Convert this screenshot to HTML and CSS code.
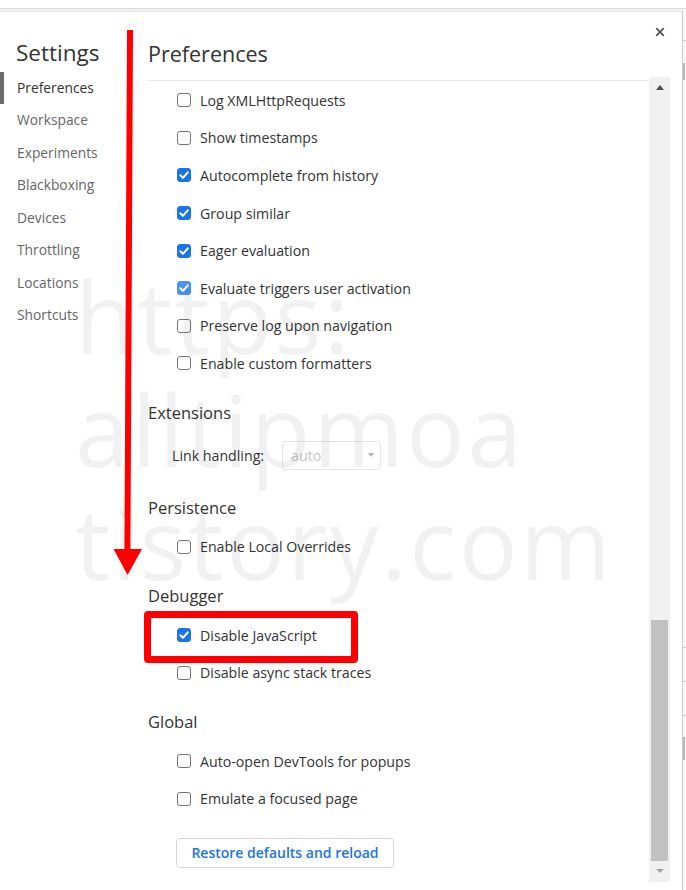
FILE: index.html
```html
<!DOCTYPE html>
<html lang="en">
<head>
<meta charset="utf-8">
<title>Settings - Preferences</title>
<link rel="stylesheet" href="styles.css">
</head>
<body>
<div class="screen">
  <div class="topbar"></div>
  <div class="main-row">
    <div class="dialog">
      <aside class="sidebar">
        <h1 class="sidebar-title">Settings</h1>
        <nav class="tabs">
          <div class="tab active">Preferences</div>
          <div class="tab">Workspace</div>
          <div class="tab">Experiments</div>
          <div class="tab">Blackboxing</div>
          <div class="tab">Devices</div>
          <div class="tab">Throttling</div>
          <div class="tab">Locations</div>
          <div class="tab">Shortcuts</div>
        </nav>
      </aside>
      <section class="panel">
        <div class="panel-main">
          <header class="panel-header">Preferences</header>
          <div class="content">
            <label class="row"><span class="cb"></span>Log XMLHttpRequests</label>
            <label class="row"><span class="cb"></span>Show timestamps</label>
            <label class="row"><span class="cb checked"><svg viewBox="0 0 14 14"><path d="M3.3 7.3 L5.9 9.8 L10.8 4.3"/></svg></span>Autocomplete from history</label>
            <label class="row"><span class="cb checked"><svg viewBox="0 0 14 14"><path d="M3.3 7.3 L5.9 9.8 L10.8 4.3"/></svg></span>Group similar</label>
            <label class="row"><span class="cb checked"><svg viewBox="0 0 14 14"><path d="M3.3 7.3 L5.9 9.8 L10.8 4.3"/></svg></span>Eager evaluation</label>
            <label class="row"><span class="cb checked soft"><svg viewBox="0 0 14 14"><path d="M3.3 7.3 L5.9 9.8 L10.8 4.3"/></svg></span>Evaluate triggers user activation</label>
            <label class="row"><span class="cb"></span>Preserve log upon navigation</label>
            <label class="row"><span class="cb"></span>Enable custom formatters</label>

            <h2 class="section-title">Extensions</h2>
            <div class="select-row">
              <span class="select-label">Link handling:</span>
              <span class="select">auto<span class="select-arrow"></span></span>
            </div>

            <h2 class="section-title">Persistence</h2>
            <label class="row"><span class="cb"></span>Enable Local Overrides</label>

            <h2 class="section-title">Debugger</h2>
            <label class="row"><span class="cb checked"><svg viewBox="0 0 14 14"><path d="M3.3 7.3 L5.9 9.8 L10.8 4.3"/></svg></span>Disable JavaScript</label>
            <label class="row"><span class="cb"></span>Disable async stack traces</label>

            <h2 class="section-title">Global</h2>
            <label class="row"><span class="cb"></span>Auto-open DevTools for popups</label>
            <label class="row"><span class="cb"></span>Emulate a focused page</label>

            <button class="restore">Restore defaults and reload</button>
          </div>
        </div>
        <div class="scrollbar">
          <span class="sb-up"></span>
          <span class="sb-thumb"></span>
          <span class="sb-down"></span>
        </div>
      </section>
      <button class="close" aria-label="Close"><svg viewBox="0 0 10 10"><path d="M1.2 1.2 L8.8 8.8 M8.8 1.2 L1.2 8.8"/></svg></button>
    </div>
    <div class="edge">
      <span class="edge-line l1"></span>
      <span class="edge-bar b1"></span>
      <span class="edge-line l2"></span>
      <span class="edge-line l3"></span>
      <span class="edge-line l3"></span>
      <span class="edge-bar b2"></span>
    </div>
  </div>

  <div class="watermark">
    <div>https:</div>
    <div>alltipmoa</div>
    <div>tistory.com</div>
  </div>

  <div class="highlight"></div>
  <svg class="arrow" viewBox="0 0 686 890" width="686" height="890">
    <path class="arrow-shaft" d="M130 30 L127.4 552"/>
    <polygon class="arrow-head" points="113.5,549 142,549 127.6,575"/>
  </svg>
</div>
</body>
</html>
```

FILE: styles.css
```css
* { box-sizing: border-box; }
html, body { margin: 0; padding: 0; background: #fff; }
body {
  font-family: "Open Sans", "Noto Sans", sans-serif;
  color: #333;
}
.screen {
  position: relative;
  width: 686px;
  height: 890px;
  overflow: hidden;
  background: #fff;
}
.topbar {
  height: 9px;
  border-bottom: 1px solid #dadada;
  background: #fff;
}
.main-row {
  display: flex;
  height: 881px;
  padding-top: 2px;
  background: linear-gradient(#f1f1f1, #fff 3px);
}
.dialog {
  position: relative;
  flex: none;
  width: 683px;
  height: 100%;
  display: flex;
  background: #fff;
  border-top: 1px solid #e2e2e2;
  border-right: 1px solid #cfcfcf;
  box-shadow: 1px 0 2px rgba(0,0,0,0.08);
}
.edge {
  flex: 1;
  display: flex;
  flex-direction: column;
  background: #fff;
}
.edge-line { display: block; height: 1px; background: #d2d2d2; }
.edge-bar { display: block; width: 2px; background: #bdbdbd; }
.l1 { margin-top: 29px; }
.b1 { margin-top: 22px; height: 17px; }
.l2 { margin-top: 567px; }
.l3 { margin-top: 33px; }
.b2 { margin-top: 21px; height: 23px; }

/* sidebar */
.sidebar {
  flex: none;
  width: 147px;
  padding-top: 26px;
}
.sidebar-title {
  margin: 0;
  padding-left: 16px;
  font-size: 22.5px;
  font-weight: 400;
  line-height: 30px;
  color: #333;
}
.tabs { margin-top: 4px; }
.tab {
  height: 32.43px;
  line-height: 32.43px;
  padding-left: 17px;
  font-size: 13.8px;
  color: #666;
}
.tab.active {
  color: #333;
  box-shadow: inset 4px 0 0 #6a6a6a;
}

/* panel */
.panel {
  flex: 1;
  display: flex;
  margin-right: 12px;
}
.panel-main {
  flex: 1;
  min-width: 0;
}
.panel-header {
  padding: 27px 0 11px 1px;
  font-size: 21.5px;
  line-height: 30px;
  color: #333;
  border-bottom: 1px solid #ebebeb;
}
.content {
  padding-left: 1px;
  padding-top: 0.5px;
  font-size: 14.2px;
  color: #333;
}
.row {
  display: flex;
  align-items: center;
  height: 37.6px;
  padding-left: 29px;
}
.cb {
  flex: none;
  width: 14px;
  height: 14px;
  margin-right: 9px;
  border: 1px solid #767676;
  border-radius: 3px;
  background: #fff;
  display: flex;
}
.cb.checked {
  border-color: #1a73e8;
  background: #1a73e8;
}
.cb.soft {
  border-color: #4d93ee;
  background: #4d93ee;
}
.cb svg {
  width: 14px;
  height: 14px;
  margin: -1px;
}
.cb svg path {
  fill: none;
  stroke: #fff;
  stroke-width: 2;
  stroke-linecap: round;
  stroke-linejoin: round;
}
.section-title {
  margin: 0 0 7px;
  padding-top: 17.8px;
  font-size: 16.5px;
  font-weight: 400;
  line-height: 26px;
  color: #333;
}
.select-row {
  display: flex;
  align-items: center;
  height: 44px;
  padding-left: 24px;
}
.select-label {
  flex: none;
  width: 110px;
}
.select {
  position: relative;
  display: flex;
  align-items: center;
  width: 99px;
  height: 29px;
  padding-left: 8px;
  border: 1px solid #e6e6e6;
  border-radius: 3px;
  color: #c6c6c6;
}
.select-arrow {
  position: absolute;
  right: 6px;
  top: 11px;
  width: 0;
  height: 0;
  border-left: 3.5px solid transparent;
  border-right: 3.5px solid transparent;
  border-top: 4px solid #b0b0b0;
}
.restore {
  display: block;
  margin: 20.5px 0 0 28px;
  width: 218px;
  height: 30px;
  padding: 0;
  border: 1px solid #d6d6d6;
  border-radius: 4px;
  background: #fff;
  font-family: "Open Sans", "Noto Sans", sans-serif;
  font-size: 14px;
  font-weight: 600;
  color: #1a73e8;
}

/* scrollbar */
.scrollbar {
  flex: none;
  width: 21px;
  height: 805px;
  margin-top: 65px;
  background: #f1f1f1;
  display: flex;
  flex-direction: column;
  align-items: center;
}
.sb-up {
  margin-top: 8px;
  width: 0;
  height: 0;
  border-left: 4.5px solid transparent;
  border-right: 4.5px solid transparent;
  border-bottom: 5px solid #505050;
}
.sb-thumb {
  margin-top: 530px;
  width: 17px;
  height: 241px;
  background: #c1c1c1;
}
.sb-down {
  margin-top: 8px;
  width: 0;
  height: 0;
  border-left: 4.5px solid transparent;
  border-right: 4.5px solid transparent;
  border-top: 4px solid #a3a3a3;
}

/* close */
.close {
  position: absolute;
  top: 14.5px;
  right: 17px;
  width: 10px;
  height: 10px;
  padding: 0;
  border: 0;
  background: transparent;
}
.close svg { display: block; width: 10px; height: 10px; }
.close path { stroke: #555; stroke-width: 1.8; fill: none; }

/* overlays */
.watermark {
  position: absolute;
  left: 75px;
  top: 260px;
  font-size: 98px;
  line-height: 113px;
  letter-spacing: 2.4px;
  color: rgba(0,0,0,0.055);
  white-space: nowrap;
  pointer-events: none;
}
.highlight {
  position: absolute;
  left: 144px;
  top: 611px;
  width: 214px;
  height: 52px;
  border: 7px solid #ff0000;
  border-radius: 4px;
  pointer-events: none;
}
.arrow {
  position: absolute;
  left: 0;
  top: 0;
  pointer-events: none;
}
.arrow-shaft { stroke: #ff0000; stroke-width: 6; fill: none; }
.arrow-head { fill: #ff0000; }
```
